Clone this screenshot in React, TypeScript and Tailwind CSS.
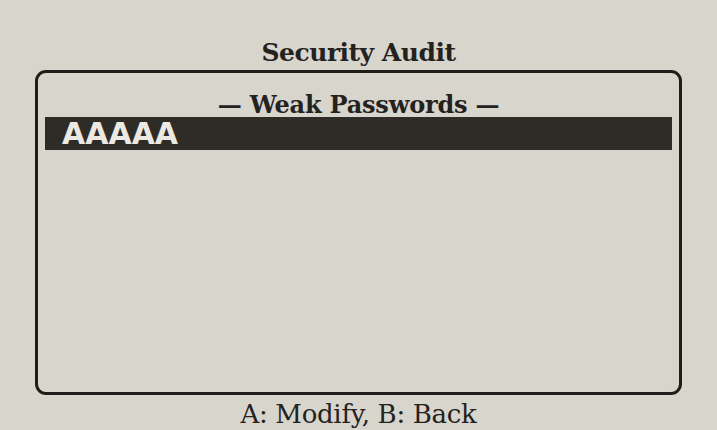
export default function App() {
  return (
    <div className="w-[717px] h-[430px] bg-[#d8d5cd] text-[#24221e] flex flex-col overflow-hidden">
      <h1 className="h-[70px] pt-[38px] text-center text-[25px] leading-[30px] font-bold tracking-[-0.5px] [font-family:'DejaVu_Serif',serif]">
        Security Audit
      </h1>
      <div className="mx-[35px] h-[325px] rounded-[11px] border-[3px] border-[#1f1d1a] px-[7px] flex flex-col">
        <div className="pt-[19px] h-[44px] text-center text-[24px] leading-[26px] font-bold tracking-[-0.2px] [font-family:'DejaVu_Serif',serif]">
          — Weak Passwords —
        </div>
        <div className="h-[33px] bg-[#2f2c27] text-[#ece9e2] pl-[17px] flex items-center text-[30px] font-bold [font-family:'DejaVu_Sans',sans-serif]">
          AAAAA
        </div>
      </div>
      <div className="pt-[4px] text-center text-[26px] leading-[30px] tracking-[-0.3px] [font-family:'DejaVu_Serif',serif]">
        A: Modify, B: Back
      </div>
    </div>
  );
}
